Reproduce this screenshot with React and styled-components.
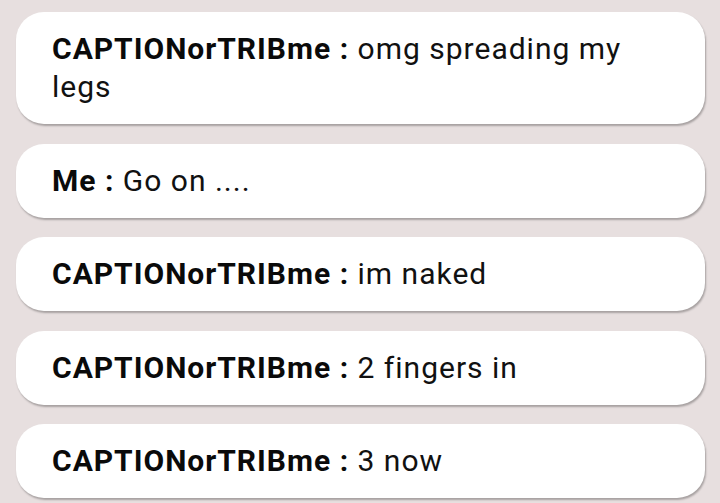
import React from 'react';
import styled, { createGlobalStyle } from 'styled-components';

const GlobalStyle = createGlobalStyle`
  html, body {
    margin: 0;
    padding: 0;
    background: #e7dfdf;
  }
`;

const messages = [
  { from: 'CAPTIONorTRIBme', text: 'omg spreading my legs' },
  { from: 'Me', text: 'Go on ....' },
  { from: 'CAPTIONorTRIBme', text: 'im naked' },
  { from: 'CAPTIONorTRIBme', text: '2 fingers in' },
  { from: 'CAPTIONorTRIBme', text: '3 now' },
];

const Feed = styled.div`
  display: flex;
  flex-direction: column;
  gap: 19.5px;
  padding: 12px 15px 6px 16px;
  font-family: Roboto, "Liberation Sans", sans-serif;
`;

const Bubble = styled.div`
  background: #ffffff;
  border-radius: 28px;
  padding: 18px 36px;
  box-shadow: 1px 2px 2px rgba(0, 0, 0, 0.28);
  font-size: 30px;
  letter-spacing: 1px;
  line-height: 38px;
  color: #111;
`;

const Name = styled.span`
  font-weight: 700;
  color: #0a0a0a;
`;

export default function App() {
  return (
    <>
      <GlobalStyle />
      <Feed>
        {messages.map((m, i) => (
          <Bubble key={i}>
            <Name>{m.from} :</Name> {m.text}
          </Bubble>
        ))}
      </Feed>
    </>
  );
}
